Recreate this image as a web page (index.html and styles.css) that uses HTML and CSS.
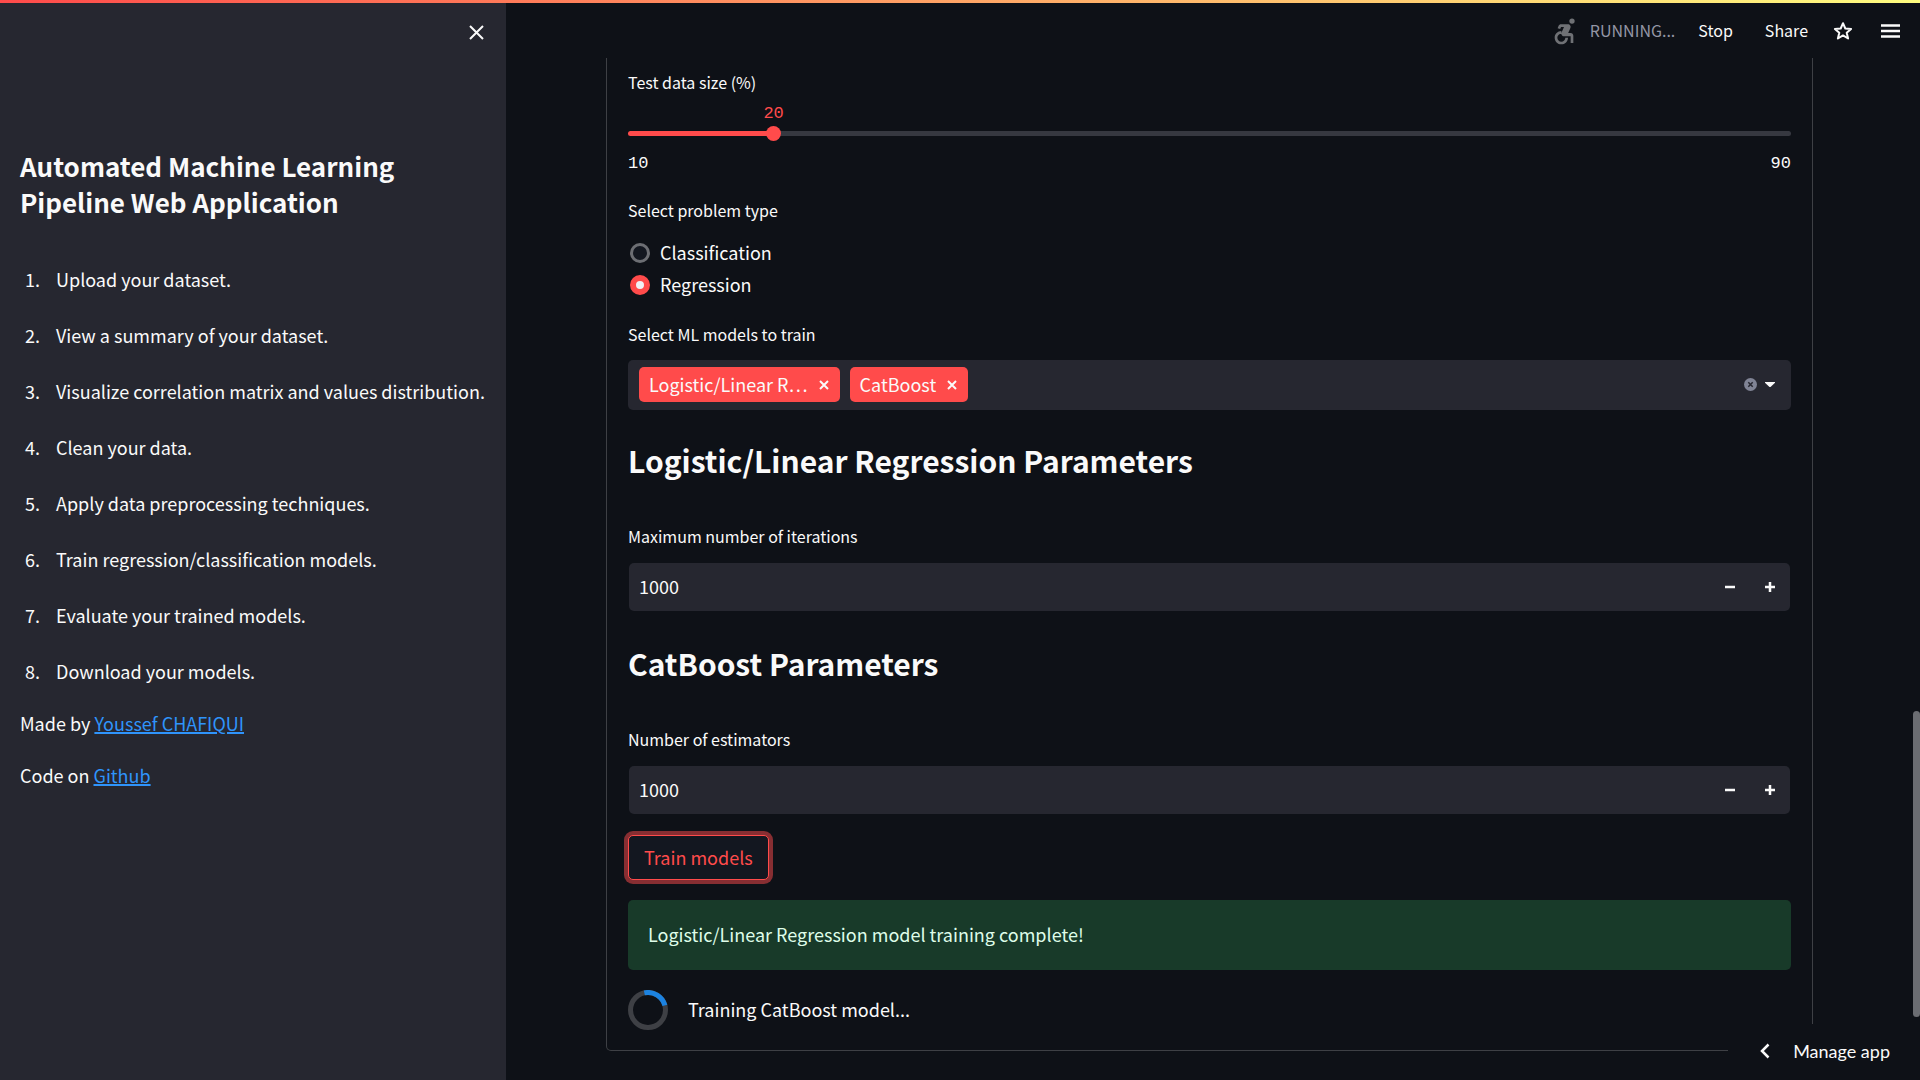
FILE: index.html
```html
<!DOCTYPE html>
<html lang="en">
<head>
<meta charset="utf-8">
<meta name="viewport" content="width=device-width, initial-scale=1">
<title>Automated Machine Learning Pipeline</title>
<link rel="stylesheet" href="styles.css">
</head>
<body>
<div class="decoration"></div>
<div class="app">
  <aside class="sidebar">
    <div class="sidebar-top">
      <button class="icon-button" type="button" aria-label="Close sidebar">
        <svg width="15" height="15" viewBox="0 0 15 15"><path d="M1 1l13 13M14 1L1 14" stroke="currentColor" stroke-width="2"/></svg>
      </button>
    </div>
    <h1 class="sidebar-title">Automated Machine Learning Pipeline Web Application</h1>
    <ol class="steps">
      <li>Upload your dataset.</li>
      <li>View a summary of your dataset.</li>
      <li>Visualize correlation matrix and values distribution.</li>
      <li>Clean your data.</li>
      <li>Apply data preprocessing techniques.</li>
      <li>Train regression/classification models.</li>
      <li>Evaluate your trained models.</li>
      <li>Download your models.</li>
    </ol>
    <p class="credit">Made by <a href="#author">Youssef CHAFIQUI</a></p>
    <p class="credit">Code on <a href="#github">Github</a></p>
  </aside>

  <main class="main">
    <header class="toolbar">
      <div class="status">
        <svg width="32" height="32" viewBox="0 0 24 24" fill="currentColor"><circle cx="18" cy="4.54" r="2"/><path d="M15 17h-2c0 1.65-1.35 3-3 3s-3-1.35-3-3 1.35-3 3-3v-2c-2.76 0-5 2.24-5 5s2.24 5 5 5 5-2.24 5-5zm2-3.5h-1.86l1.67-3.67C17.42 8.5 16.44 7 14.96 7h-5.2c-.81 0-1.54.47-1.87 1.2L7.22 10l1.92.53L9.79 9H12l-1.83 4.1c-.6 1.33.39 2.9 1.85 2.9H17v5h2v-5.5c0-1.1-.9-2-2-2z"/></svg>
        <span class="status-text">RUNNING...</span>
      </div>
      <button class="text-button" type="button">Stop</button>
      <button class="text-button" type="button">Share</button>
      <button class="icon-button" type="button" aria-label="Favorite">
        <svg width="20" height="20" viewBox="0 0 20 20"><path d="M10 2.2l2.3 5.3 5.8.5-4.4 3.8 1.4 5.7-5.1-3.1-5.1 3.1 1.4-5.7L1.900 8l5.800-.5z" fill="none" stroke="currentColor" stroke-width="2" stroke-linejoin="round"/></svg>
      </button>
      <button class="icon-button" type="button" aria-label="Menu">
        <svg width="19" height="14" viewBox="0 0 19 14"><path d="M0 1.500h19M0 7h19M0 12.500h19" stroke="currentColor" stroke-width="2.300"/></svg>
      </button>
    </header>

    <form class="panel">
      <label class="label" for="test-size">Test data size (%)</label>
      <div class="slider" style="--value: 12.5%">
        <output class="slider-value" for="test-size">20</output>
        <div class="slider-track"><input id="test-size" type="range" min="10" max="90" value="20"></div>
        <div class="slider-range"><span>10</span><span>90</span></div>
      </div>

      <fieldset class="radio-group">
        <legend class="label">Select problem type</legend>
        <label class="radio"><input type="radio" name="problem">Classification</label>
        <label class="radio"><input type="radio" name="problem" checked>Regression</label>
      </fieldset>

      <label class="label models-label" for="models">Select ML models to train</label>
      <div class="multiselect">
        <span class="tag"><span class="tag-text">Logistic/Linear R…</span>
          <button class="icon-button" type="button" aria-label="Remove Logistic/Linear Regression"><svg width="10" height="10" viewBox="0 0 10 10"><path d="M1 1l8 8M9 1L1 9" stroke="currentColor" stroke-width="2"/></svg></button></span>
        <span class="tag"><span class="tag-text">CatBoost</span>
          <button class="icon-button" type="button" aria-label="Remove CatBoost"><svg width="10" height="10" viewBox="0 0 10 10"><path d="M1 1l8 8M9 1L1 9" stroke="currentColor" stroke-width="2"/></svg></button></span>
        <input class="multiselect-input" id="models" type="text">
        <button class="icon-button clear" type="button" aria-label="Clear all"><svg width="13" height="13" viewBox="0 0 13 13"><circle cx="6.500" cy="6.500" r="6.500" fill="#808495"/><path d="M4.300 4.300l4.400 4.400M8.700 4.300L4.300 8.700" stroke="#262730" stroke-width="1.500"/></svg></button>
        <button class="icon-button" type="button" aria-label="Open"><svg width="10" height="6" viewBox="0 0 10 6"><path d="M0 0h10v.8L5.500 5h-1L0 .8z" fill="currentColor"/></svg></button>
      </div>

      <h2 class="heading">Logistic/Linear Regression Parameters</h2>
      <label class="label" for="iterations">Maximum number of iterations</label>
      <div class="number">
        <input id="iterations" type="text" inputmode="numeric" value="1000">
        <button class="step" type="button" aria-label="Decrease"><svg width="10" height="10" viewBox="0 0 10 10"><path d="M0 5h10" stroke="currentColor" stroke-width="2.500"/></svg></button>
        <button class="step" type="button" aria-label="Increase"><svg width="10" height="10" viewBox="0 0 10 10"><path d="M0 5h10M5 0v10" stroke="currentColor" stroke-width="2.500"/></svg></button>
      </div>

      <h2 class="heading">CatBoost Parameters</h2>
      <label class="label" for="estimators">Number of estimators</label>
      <div class="number">
        <input id="estimators" type="text" inputmode="numeric" value="1000">
        <button class="step" type="button" aria-label="Decrease"><svg width="10" height="10" viewBox="0 0 10 10"><path d="M0 5h10" stroke="currentColor" stroke-width="2.500"/></svg></button>
        <button class="step" type="button" aria-label="Increase"><svg width="10" height="10" viewBox="0 0 10 10"><path d="M0 5h10M5 0v10" stroke="currentColor" stroke-width="2.500"/></svg></button>
      </div>

      <button class="train" type="button">Train models</button>
      <div class="alert" role="status">Logistic/Linear Regression model training complete!</div>
      <div class="spinner">
        <svg width="40" height="40" viewBox="0 0 40 40" fill="none" stroke-width="5"><circle cx="20" cy="20" r="17.500" stroke="#3e4045"/><path d="M16.360 2.880A17.500 17.500 0 0 1 36.900 15.470" stroke="#1c83e1"/></svg>
        <span>Training CatBoost model...</span>
      </div>
    </form>
  </main>
  <div class="scrollbar"><div class="scroll-thumb"></div></div>
</div>
<button class="manage" type="button">
  <svg width="10" height="16" viewBox="0 0 10 16"><path d="M8.500 1.500L2 8l6.500 6.500" fill="none" stroke="currentColor" stroke-width="2.500"/></svg>
  Manage app
</button>
</body>
</html>
```
FILE: styles.css
```css
* { box-sizing: border-box; }

body {
  margin: 0;
  background: #0e1117;
  color: #fafafa;
  font: 18px/32px "Noto Sans CJK KR", "Noto Sans", sans-serif;
}

button, input {
  margin: 0;
  padding: 0;
  border: 0;
  background: none;
  color: inherit;
  font: inherit;
}

svg { display: block; }

.decoration {
  position: fixed;
  inset: 0 0 auto;
  height: 3px;
  background: linear-gradient(90deg, #ff4b4b, #fffd80);
  z-index: 2;
}

.app {
  display: grid;
  grid-template-columns: 506px minmax(0, 1fr) 7px;
  min-height: 100vh;
}

/* Sidebar */
.sidebar { padding: 0 20px; background: #262730; }

.sidebar-top {
  display: flex;
  justify-content: flex-end;
  height: 148px;
  padding: 25px 2px 0 0;
}

.icon-button { display: flex; align-items: center; justify-content: center; }
.sidebar-top .icon-button { height: 15px; }

.sidebar-title { margin: 0 0 43px; font-size: 26px; line-height: 36px; font-weight: 600; }

.steps { margin: 0; padding: 0 0 0 5px; }
.steps li { display: flex; margin-bottom: 24px; counter-increment: step; list-style: none; }
.steps li::before { content: counter(step) "."; width: 31px; }
.steps li:last-child { margin-bottom: 20px; }

.credit { margin: 0 0 20px; }
.credit a { color: #2f94fb; text-decoration-thickness: 2px; }

/* Toolbar */
.toolbar {
  display: flex;
  align-items: center;
  justify-content: flex-end;
  height: 58px;
  padding: 3px 13px 0 0;
  font-size: 16px;
}

.status { display: flex; align-items: center; gap: 10px; margin-right: 23px; color: #6f7175; }
.status-text { padding-bottom: 2px; color: #9496a5; }
.text-button { margin-right: 32px; padding-bottom: 2px; }
.toolbar .text-button + .icon-button { margin: 0 28px 0 -7px; }

/* Form panel */
.panel {
  margin: 0 100px;
  padding: 12px 21px 20px;
  border: 1px solid #3e4045;
  border-top: 0;
  border-radius: 0 0 5px 5px;
}

.label { display: block; padding: 0; font-size: 16px; line-height: 24px; }

.slider { font: 17px/24px "Liberation Mono", monospace; margin-bottom: 22px; }
.slider-value { display: block; margin: 8px 0 5px calc(var(--value) - 10px); color: #ff4b4b; }
.slider-track {
  height: 5px;
  border-radius: 3px;
  background: linear-gradient(90deg, #ff4b4b var(--value), #363840 var(--value));
}
.slider-track input {
  display: block;
  width: calc(100% + 14px);
  height: 5px;
  margin: 0 -7px;
  appearance: none;
}
.slider-track input::-webkit-slider-runnable-track { height: 5px; }
.slider-track input::-webkit-slider-thumb {
  appearance: none;
  width: 15px;
  height: 15px;
  margin-top: -5px;
  border-radius: 50%;
  background: #ff4b4b;
}
.slider-range { display: flex; justify-content: space-between; margin-top: 16px; }

.radio-group { margin: 0; padding: 0; border: 0; }
.radio-group .label { margin-bottom: 14px; }
.radio { display: flex; align-items: center; gap: 10px; padding-left: 2px; }
.radio input {
  appearance: none;
  width: 20px;
  height: 20px;
  margin-top: 2px;
  border: 3px solid #6c6e73;
  border-radius: 50%;
  background: #131720;
}
.radio input:checked { border: 6px solid #ff4b4b; background: #f0f2f6; }

.models-label { margin: 22px 0 14px; }
.multiselect {
  display: flex;
  align-items: center;
  gap: 10px;
  min-height: 50px;
  padding: 7px 16px 8px 11px;
  border-radius: 5px;
  background: #262730;
}
.tag {
  display: flex;
  align-items: center;
  gap: 11px;
  height: 35px;
  padding: 0 11px 0 10px;
  border-radius: 5px;
  background: #ff4b4b;
}
.tag-text { padding-bottom: 2px; white-space: nowrap; }
.multiselect-input { flex: 1; min-width: 0; outline: 0; }
.clear { margin-right: -2px; }

.heading { margin: 29px 0 43px; font-size: 30px; line-height: 42px; font-weight: 600; }

.number {
  display: flex;
  height: 48px;
  margin: 15px 1px 0;
  border-radius: 5px;
  background: #262730;
}
.number + .heading { margin-top: 31px; }
.number input { flex: 1; min-width: 0; padding: 0 0 2px 10px; }
.step { display: flex; align-items: center; justify-content: center; width: 40px; }

.train {
  display: block;
  height: 45px;
  margin: 21px 0 20px;
  padding: 0 15px 2px;
  border: 1px solid #ff4b4b;
  border-radius: 5px;
  background: #131720;
  box-shadow: 0 0 0 4px #872e32;
  color: #ff4b4b;
}

.alert {
  margin-bottom: 20px;
  padding: 18px 20px 20px;
  border-radius: 5px;
  background: #183a29;
  color: #dffde9;
}

.spinner { display: flex; align-items: center; gap: 20px; }
.spinner span { padding-bottom: 2px; }

/* Page scrollbar */
.scrollbar { display: flex; flex-direction: column; justify-content: flex-end; padding-bottom: 63px; }
.scroll-thumb { height: 306px; border-radius: 4px; background: #6b6d72; }

/* Floating app control */
.manage {
  position: fixed;
  right: 0;
  bottom: 0;
  display: flex;
  align-items: center;
  gap: 23px;
  height: 56px;
  padding: 0 30px 2px 32px;
  background: #0e1117;
  font: 18px/24px Lato, sans-serif;
}
```
